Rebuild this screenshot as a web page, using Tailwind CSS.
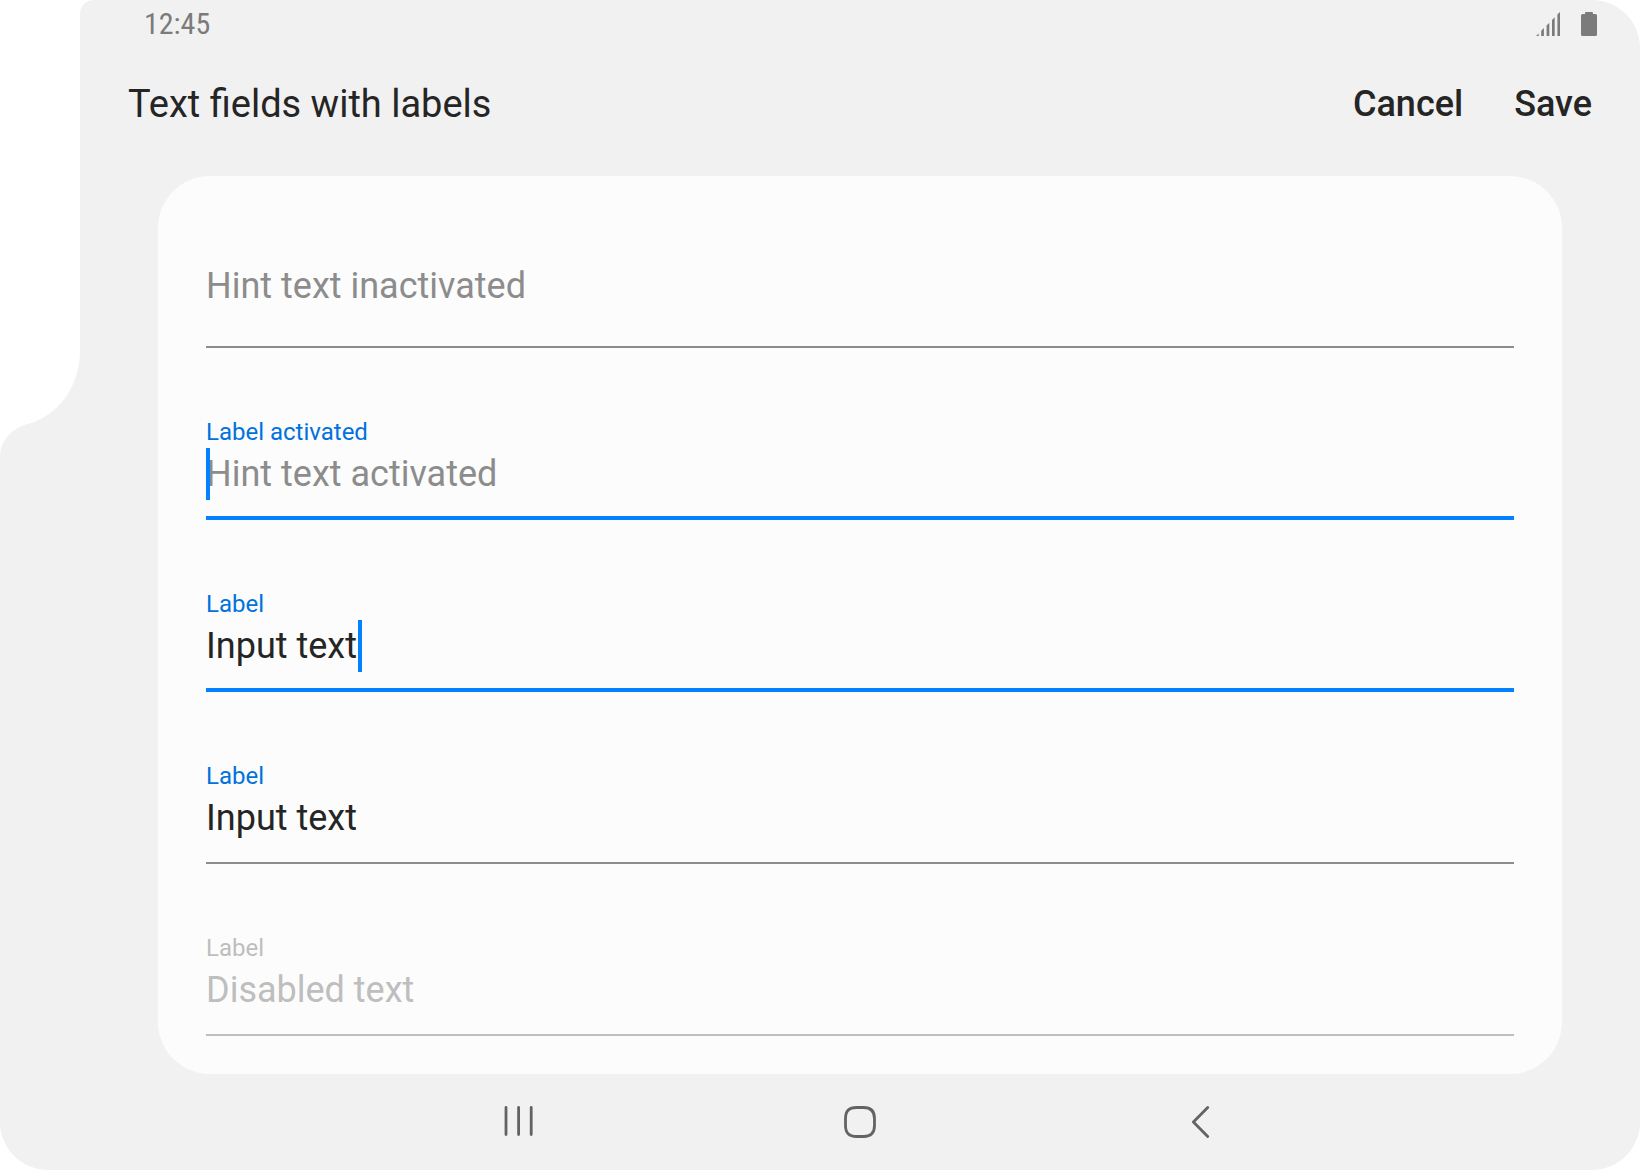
<!DOCTYPE html>
<html lang="en">
<head>
<meta charset="utf-8">
<meta name="viewport" content="width=device-width, initial-scale=1">
<title>Text fields with labels</title>
<script src="https://cdn.jsdelivr.net/npm/@tailwindcss/browser@4"></script>
</head>
<body class="bg-white font-['Roboto',sans-serif] text-[#252525]">
<div class="relative flex min-h-screen flex-col rounded-tr-[48px] rounded-b-[48px] bg-[#f1f1f1]">
  <!-- Cut-out along the upper left edge of the screen -->
  <svg class="absolute left-0 top-0 h-[460px] w-24" viewBox="0 0 96 460" fill="#fff" aria-hidden="true"><path d="M0 0H95C86 0 80 6 80 15V350C80 387 58 416 28 424C12 428 0 441 0 457Z"/></svg>

  <div class="relative flex h-12 items-center justify-between pl-36 pr-[43px] text-[#7b7b7b]">
    <time class="font-['Roboto_Condensed','Roboto',sans-serif] text-[30px] leading-12">12:45</time>
    <div class="flex items-center gap-[21px]">
      <svg class="size-6" viewBox="0 0 24 24" fill="currentColor" role="img" aria-label="Signal"><path d="M0 24L2.6 21.4V24ZM5.2 24V18.8L7.9 16V24ZM10.6 24V13.4L13.3 10.7V24ZM16 24V8L18.7 5.3V24ZM21.4 24V2.6L24 0V24Z"/></svg>
      <svg class="h-6 w-4" viewBox="0 0 16 24" fill="currentColor" role="img" aria-label="Battery"><path d="M5 0H11Q12 0 12 1V2H14.5Q16 2 16 3.5V22.500Q16 24 14.500 24H1.500Q0 24 0 22.500V3.500Q0 2 1.500 2H4V1Q4 0 5 0Z"/></svg>
    </div>
  </div>

  <header class="relative flex h-32 items-start justify-between pl-32 pr-12 pt-8">
    <h1 class="text-[38px] leading-12">Text fields with labels</h1>
    <div class="flex gap-[51px] text-4xl font-medium leading-12">
      <button type="button">Cancel</button>
      <button type="submit" form="fields">Save</button>
    </div>
  </header>

  <form id="fields" class="relative ml-[158px] mr-[78px] flex flex-col rounded-[52px] bg-[#fcfcfc] px-12 pb-[38px]">
    <div class="flex h-43 flex-col justify-end border-b-2 border-[#8c8c8c] pb-[34px]">
      <input class="h-13 w-full text-4xl placeholder:text-[#8c8c8c] focus:outline-none" type="text" aria-label="Hint text inactivated" placeholder="Hint text inactivated">
    </div>
    <div class="flex h-43 flex-col justify-end border-b-4 border-[#0381fe] pb-4">
      <label for="f2" class="text-2xl leading-8 text-[#0072de]">Label activated</label>
      <div class="relative">
        <input id="f2" class="block h-13 w-full text-4xl placeholder:text-[#8c8c8c] focus:outline-none" type="text" placeholder="Hint text activated">
        <span class="absolute left-0 top-0 h-13 w-1 bg-[#0381fe]"></span>
      </div>
    </div>
    <div class="flex h-43 flex-col justify-end border-b-4 border-[#0381fe] pb-4">
      <label for="f3" class="text-2xl leading-8 text-[#0072de]">Label</label>
      <div class="flex gap-px">
        <input id="f3" class="block h-13 text-4xl field-sizing-content focus:outline-none" type="text" value="Input text">
        <span class="h-13 w-1 bg-[#0381fe]"></span>
      </div>
    </div>
    <div class="flex h-43 flex-col justify-end border-b-2 border-[#8c8c8c] pb-[18px]">
      <label for="f4" class="text-2xl leading-8 text-[#0072de]">Label</label>
      <input id="f4" class="h-13 w-full text-4xl focus:outline-none" type="text" value="Input text">
    </div>
    <div class="flex h-43 flex-col justify-end border-b-2 border-[#bebebe] pb-[18px] text-[#bebebe]">
      <label for="f5" class="text-2xl leading-8">Label</label>
      <input id="f5" class="h-13 w-full text-4xl" type="text" value="Disabled text" disabled>
    </div>
  </form>

  <nav class="ml-[158px] mr-[78px] h-24" aria-label="System">
    <div class="mx-auto grid h-full w-[73%] grid-cols-3 text-[#636363]">
      <button type="button" class="flex items-center justify-center" aria-label="Recents">
        <svg class="size-8" viewBox="0 0 32 32" fill="none" stroke="currentColor" stroke-width="2.8" stroke-linecap="round"><path d="M4 1.400V28.600M16.600 1.400V28.600M29.200 1.400V28.600"/></svg>
      </button>
      <button type="button" class="flex items-center justify-center" aria-label="Home">
        <svg class="size-8" viewBox="0 0 32 32" fill="none" stroke="currentColor" stroke-width="2.8"><path d="M12.500 1.500H19.500C27 1.500 30.500 5 30.500 12.500V19.500C30.500 27 27 30.500 19.500 30.500H12.500C5 30.500 1.500 27 1.500 19.500V12.500C1.500 5 5 1.500 12.500 1.500Z"/></svg>
      </button>
      <button type="button" class="flex items-center justify-center" aria-label="Back">
        <svg class="size-8" viewBox="0 0 32 32" fill="none" stroke="currentColor" stroke-width="2.8" stroke-linecap="round" stroke-linejoin="round"><path d="M21.700 1.500L7.400 16L21.700 30.500"/></svg>
      </button>
    </div>
  </nav>
</div>
</body>
</html>
